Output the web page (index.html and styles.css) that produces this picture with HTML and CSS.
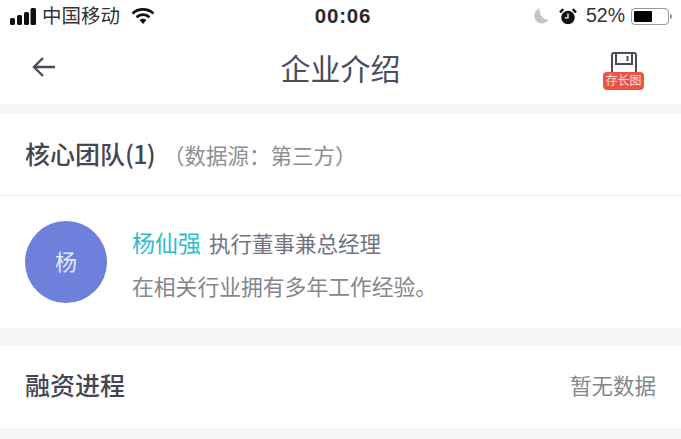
FILE: index.html
```html
<!DOCTYPE html>
<html lang="zh-CN">
<head>
  <meta charset="UTF-8">
  <meta name="viewport" content="width=device-width, initial-scale=1.0">
  <title>企业介绍</title>
  <link rel="stylesheet" href="styles.css">
</head>
<body>
  <div class="status">
    <div class="status-left">
      <svg class="signal" width="26" height="17" viewBox="0 0 26 17">
        <rect x="0" y="10" width="5" height="7" rx="1.5"/>
        <rect x="7" y="7" width="5" height="10" rx="1.5"/>
        <rect x="14" y="4" width="5" height="13" rx="1.5"/>
        <rect x="20.500" y="0" width="5.500" height="17" rx="1.5"/>
      </svg>
      <span class="carrier">中国移动</span>
      <svg class="wifi" width="24" height="17" viewBox="0 0 24 17">
        <path d="M1.500 6.500C7.500 1 16.500 1 22.500 6.500" fill="none" stroke="#111" stroke-width="2.800"/>
        <path d="M5.500 10.200C9.300 6.800 14.700 6.800 18.500 10.200" fill="none" stroke="#111" stroke-width="2.800"/>
        <path d="M8.600 13L12 17l3.400-4C13.400 11.400 10.600 11.400 8.600 13Z" fill="#111"/>
      </svg>
    </div>
    <span class="clock">00:06</span>
    <div class="status-right">
      <svg class="moon" width="16" height="16" viewBox="0 0 16 16">
        <path d="M7 .5A7.600 7.600 0 1 0 15.500 11.500 8.500 8.500 0 0 1 7 .5Z" fill="#c4c4c4"/>
      </svg>
      <svg class="alarm" width="18" height="17" viewBox="0 0 18 17">
        <circle cx="9" cy="9.500" r="6.800" fill="#111"/>
        <path d="M9 5.500v4.400H5.800" fill="none" stroke="#fff" stroke-width="1.300"/>
        <path d="M1 4.400 4.200 1.200M17 4.400 13.800 1.200" stroke="#111" stroke-width="2.400"/>
      </svg>
      <span class="battery-text">52%</span>
      <div class="battery"><div class="battery-fill"></div></div>
      <div class="battery-tip"></div>
    </div>
  </div>

  <header class="nav">
    <svg class="back" width="26" height="24" viewBox="0 0 26 24">
      <path d="M24 12H3M12 3l-9 9 9 9" fill="none" stroke="#4b4d5c" stroke-width="2.400"/>
    </svg>
    <h1 class="nav-title">企业介绍</h1>
    <div class="save">
      <svg class="save-icon" width="28" height="21" viewBox="0 0 28 21">
        <path d="M2 20V3a2 2 0 0 1 2-2h20a2 2 0 0 1 2 2v17" fill="none" stroke="#4b4d5c" stroke-width="2"/>
        <path d="M6 2v10h16V2M17.500 4v5" fill="none" stroke="#4b4d5c" stroke-width="2"/>
      </svg>
      <span class="save-badge">存长图</span>
    </div>
  </header>

  <section class="card team">
    <div class="team-head">
      <span class="section-title">核心团队<span class="count">(1)</span></span>
      <span class="source">（数据源：第三方）</span>
    </div>
    <div class="member">
      <div class="avatar"><span class="avatar-text">杨</span></div>
      <div class="member-info">
        <div class="member-line"><span class="member-name">杨仙强</span><span class="member-role">执行董事兼总经理</span></div>
        <div class="member-desc">在相关行业拥有多年工作经验。</div>
      </div>
    </div>
  </section>

  <section class="card funding">
    <span class="section-title funding-title">融资进程</span>
    <span class="no-data">暂无数据</span>
  </section>
</body>
</html>
```

FILE: styles.css
```css
html, body { margin: 0; padding: 0; }
body {
  width: 681px;
  height: 439px;
  overflow: hidden;
  background: #f5f5f6;
  font-family: "Liberation Sans", "Noto Sans CJK SC", sans-serif;
}

.status {
  height: 32px;
  background: #fff;
  display: grid;
  grid-template-columns: 1fr auto 1fr;
  align-items: center;
  padding: 0 9px 0 10px;
}
.status-left, .status-right { display: flex; align-items: center; }
.status-right { justify-content: flex-end; }
.signal { fill: #111; margin-right: 6px; }
.carrier { font-size: 19.500px; color: #333; line-height: 30px; }
.wifi { margin-left: 11px; margin-top: -1px; }
.clock {
  font-size: 20.500px;
  font-weight: bold;
  color: #2a2a2a;
  letter-spacing: 0.800px;
  margin-left: 4px;
  margin-top: -1px;
}
.moon { margin-right: 10px; }
.alarm { margin-right: 9px; }
.battery-text { font-size: 19.500px; color: #333; margin-right: 6px; margin-top: -1px; }
.battery {
  width: 38px;
  height: 17px;
  border: 1.500px solid #999;
  border-radius: 4px;
  padding: 2px;
  box-sizing: border-box;
  background: #fff;
  display: flex;
}
.battery-fill { width: 18px; background: #000; border-radius: 1px; }
.battery-tip { width: 2px; height: 5px; background: #999; margin-left: 1px; border-radius: 0 2px 2px 0; }

.nav {
  height: 72px;
  background: #fff;
  display: grid;
  grid-template-columns: 1fr auto 1fr;
  align-items: center;
  padding: 0 37px 0 31px;
}
.back { margin-bottom: 2px; }
.nav-title {
  margin: -2px 0 0 6px;
  font-size: 30px;
  font-weight: normal;
  color: #4b4d5c;
}
.save {
  justify-self: end;
  display: flex;
  flex-direction: column;
  align-items: center;
  width: 41px;
  margin-top: 5px;
}
.save-icon { display: block; margin-bottom: -1px; }
.save-badge {
  background: #ec5545;
  color: #fbdcd8;
  border-radius: 4px;
  font-size: 12px;
  line-height: 18px;
  height: 18px;
  width: 41px;
  text-align: center;
  white-space: nowrap;
}

.card { background: #fff; }
.team { margin-top: 9px; height: 215px; }
.team-head {
  height: 83px;
  box-sizing: border-box;
  border-bottom: 1px solid #f0f0f0;
  display: flex;
  align-items: center;
  padding-left: 25px;
}
.section-title {
  font-family: "Noto Sans CJK SC", sans-serif;
  font-size: 25px;
  font-weight: 500;
  line-height: 36px;
  color: #444653;
  margin-top: -2px;
}
.funding-title { margin-top: -5px; }
.count { letter-spacing: -0.700px; }
.source { font-size: 21.500px; color: #8d8e96; margin-left: 8px; }

.member { display: flex; padding: 25px 0 0 25px; }
.avatar {
  width: 82px;
  height: 82px;
  border-radius: 50%;
  background: #6d80dc;
  color: #e6e9fa;
  font-size: 22px;
  display: flex;
  align-items: center;
  justify-content: center;
  flex: none;
}
.avatar-text { margin-top: -4px; }
.member-info { margin-left: 25px; }
.member-line { height: 33px; line-height: 33px; margin-top: 7px; }
.member-name { font-size: 23px; color: #2fbcd0; }
.member-role { font-size: 21.500px; color: #717380; margin-left: 8px; }
.member-desc { font-size: 21.800px; color: #85868e; margin-top: 11px; line-height: 32px; }

.funding {
  margin-top: 17px;
  height: 83px;
  display: flex;
  align-items: center;
  justify-content: space-between;
  padding: 0 25px;
}
.no-data { font-size: 21.500px; color: #85868e; margin-top: -5px; }
```
